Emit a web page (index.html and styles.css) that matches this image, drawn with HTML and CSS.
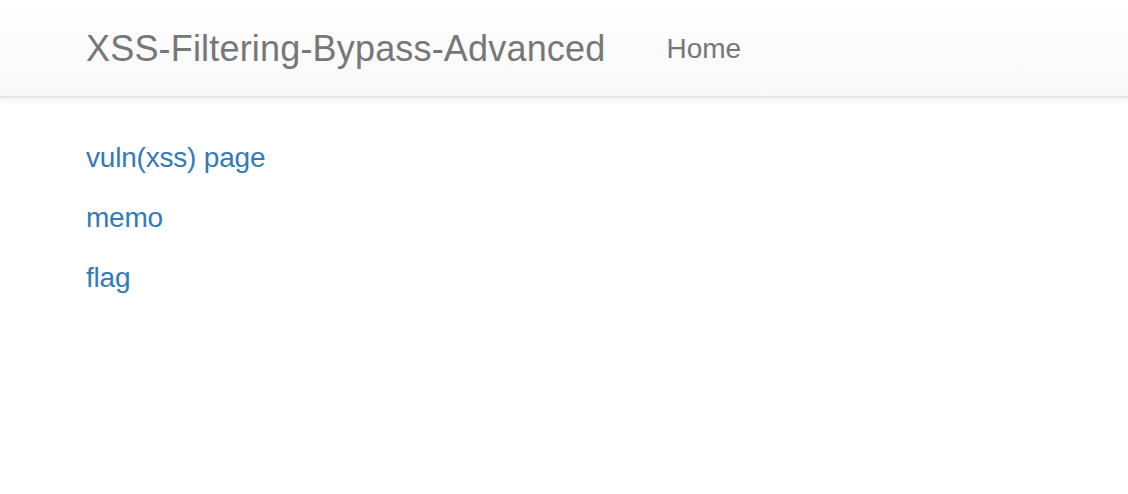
FILE: index.html
```html
<!DOCTYPE html>
<html lang="en">
<head>
<meta charset="utf-8">
<title>XSS-Filtering-Bypass-Advanced</title>
<link rel="stylesheet" href="styles.css">
</head>
<body>
<nav class="navbar">
  <div class="container nav-inner">
    <a class="brand" href="#">XSS-Filtering-Bypass-Advanced</a>
    <ul class="nav-links">
      <li><a href="#">Home</a></li>
    </ul>
  </div>
</nav>
<main class="container content">
  <p><a href="#">vuln(xss) page</a></p>
  <p><a href="#">memo</a></p>
  <p><a href="#">flag</a></p>
</main>
</body>
</html>
```
FILE: styles.css
```css
* { box-sizing: border-box; }
html, body {
  margin: 0;
  padding: 0;
  background: #fff;
  font-family: "Liberation Sans", Arial, Helvetica, sans-serif;
  font-size: 28px;
  line-height: 40px;
  color: #333;
}
a { text-decoration: none; }
.container {
  padding: 0 86px;
}
.navbar {
  height: 98px;
  background-image: linear-gradient(to bottom, #ffffff 0, #f8f8f8 100%);
  border-bottom: 2px solid #e5e5e5;
  box-shadow: 0 2px 8px rgba(0, 0, 0, 0.06);
  margin-bottom: 40px;
}
.nav-inner {
  display: flex;
  align-items: flex-start;
  height: 100%;
}
.brand {
  display: block;
  font-size: 36px;
  line-height: 40px;
  letter-spacing: 0.18px;
  padding: 29px 31px 28px 0;
  color: #777;
}
.nav-links {
  display: flex;
  list-style: none;
  margin: 0;
  padding: 0;
}
.nav-links a {
  display: block;
  font-size: 28px;
  line-height: 40px;
  padding: 29px 30px;
  color: #777;
}
.content p {
  margin: 0 0 20px;
}
.content a {
  color: #337ab7;
  letter-spacing: -0.2px;
}
```
